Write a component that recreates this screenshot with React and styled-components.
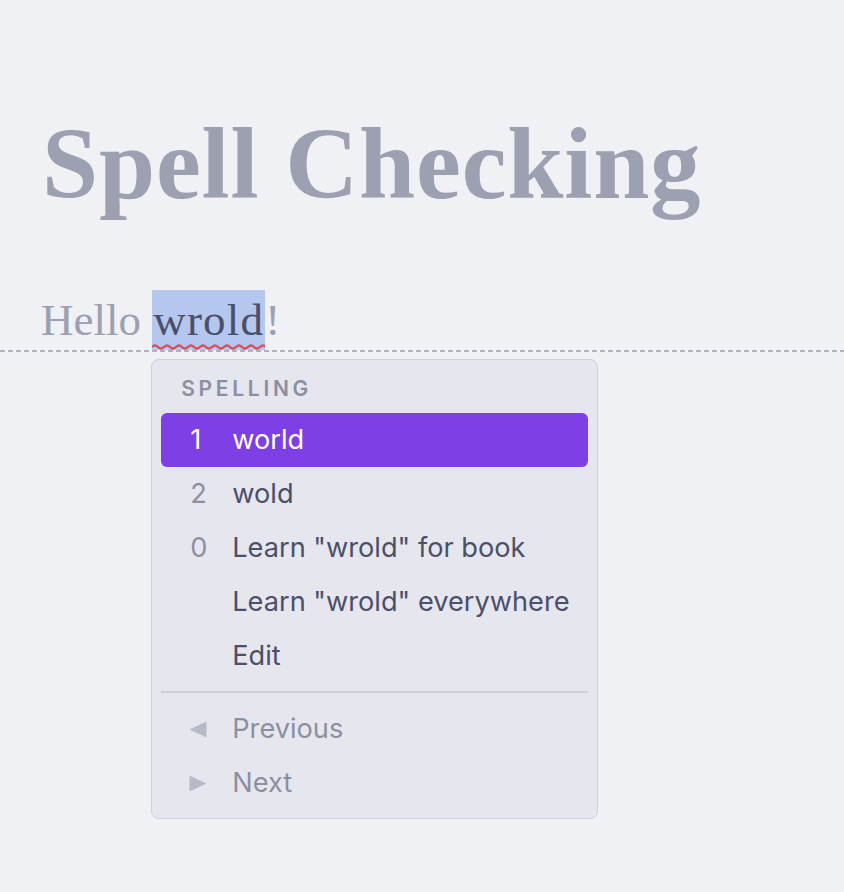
import React from "react";
import styled, { createGlobalStyle } from "styled-components";

const Global = createGlobalStyle`
  html, body {
    margin: 0;
    padding: 0;
    background: #eff1f5;
  }
  * {
    box-sizing: border-box;
  }
`;

const Page = styled.div`
  min-height: 892px;
  background: #eff1f5;
  padding-top: 96px;
`;

const Title = styled.h1`
  margin: 0 0 0 42px;
  font-family: "Liberation Serif", serif;
  font-weight: 700;
  font-size: 101px;
  line-height: 136px;
  color: #9ca0b0;
  letter-spacing: 0.8px;
`;

const Line = styled.div`
  margin-top: 58px;
  padding-left: 41px;
  height: 60px;
  display: flex;
  align-items: flex-end;
  font-family: "Liberation Serif", serif;
  font-size: 45px;
  line-height: 60px;
  color: #9ca0b0;
  white-space: pre;
`;

const Anchor = styled.span`
  position: relative;
  display: inline-block;
`;

const Misspelled = styled.span`
  display: inline-block;
  background: #b5c6ef;
  color: #4c4f69;
  padding: 0 1px;
  letter-spacing: 1.2px;
`;

const Squiggle = styled.svg`
  position: absolute;
  left: 0;
  bottom: 0;
  display: block;
`;

const Rule = styled.div`
  height: 1.5px;
  background: repeating-linear-gradient(
    to right,
    #afb1bd 0,
    #afb1bd 5px,
    transparent 5px,
    transparent 8px
  );
`;

const Menu = styled.div`
  position: absolute;
  left: -1px;
  top: 69px;
  width: 447px;
  padding: 9px 9px 8px;
  background: #e6e7ee;
  border: 1.5px solid #ccd0da;
  border-radius: 8px;
  font-family: Inter, "Noto Sans", sans-serif;
  white-space: nowrap;
  z-index: 10;
`;

const Label = styled.div`
  padding: 8px 0 0 20px;
  height: 44px;
  font-size: 21px;
  line-height: 24px;
  font-weight: 600;
  letter-spacing: 3.7px;
  color: #8c8fa1;
`;

const Item = styled.div`
  display: flex;
  align-items: center;
  height: 54px;
  border-radius: 6px;
  font-size: 27.2px;
  background: ${(p) => (p.$active ? "#7e3fe4" : "transparent")};
  color: ${(p) => (p.$active ? "#ffffff" : p.$muted ? "#8c8fa1" : "#4c4f69")};
`;

const Key = styled.span`
  width: 71px;
  padding-left: 29px;
  color: ${(p) => (p.$active ? "#ffffff" : "#8c8fa1")};
`;

const Arrow = styled.span`
  width: 71px;
  padding-left: 28px;
  display: flex;
  align-items: center;
  svg {
    display: block;
  }
`;

const Divider = styled.div`
  height: 2px;
  background: #ccd0da;
  margin: 8px 0 9px;
`;

const Tri = ({ dir }) => (
  <svg width="18" height="17" viewBox="0 0 18 17">
    {dir === "left" ? (
      <path d="M0.5 8.5 L17.5 0.5 L17.5 16.5 Z" fill="#b6b9c6" />
    ) : (
      <path d="M17.5 8.5 L0.5 0.5 L0.5 16.5 Z" fill="#b6b9c6" />
    )}
  </svg>
);

const suggestions = [
  { key: "1", text: "world", active: true },
  { key: "2", text: "wold" },
  { key: "0", text: 'Learn "wrold" for book' },
  { key: "", text: 'Learn "wrold" everywhere' },
  { key: "", text: "Edit" },
];

export default function App() {
  return (
    <>
      <Global />
      <Page>
        <Title>Spell Checking</Title>
        <Line>
          {"Hello "}
          <Anchor>
            <Misspelled>wrold</Misspelled>
            <Squiggle width="113" height="7" viewBox="0 0 113 7">
              <path
                d="M0 4 Q3 1 6 4 T12 4 T18 4 T24 4 T30 4 T36 4 T42 4 T48 4 T54 4 T60 4 T66 4 T72 4 T78 4 T84 4 T90 4 T96 4 T102 4 T108 4 T114 4"
                fill="none"
                stroke="#d9505c"
                strokeWidth="2.4"
              />
            </Squiggle>
            <Menu>
              <Label>SPELLING</Label>
              {suggestions.map((s) => (
                <Item key={s.text} $active={s.active}>
                  <Key $active={s.active}>{s.key}</Key>
                  {s.text}
                </Item>
              ))}
              <Divider />
              <Item $muted>
                <Arrow>
                  <Tri dir="left" />
                </Arrow>
                Previous
              </Item>
              <Item $muted>
                <Arrow>
                  <Tri dir="right" />
                </Arrow>
                Next
              </Item>
            </Menu>
          </Anchor>
          !
        </Line>
        <Rule />
      </Page>
    </>
  );
}
